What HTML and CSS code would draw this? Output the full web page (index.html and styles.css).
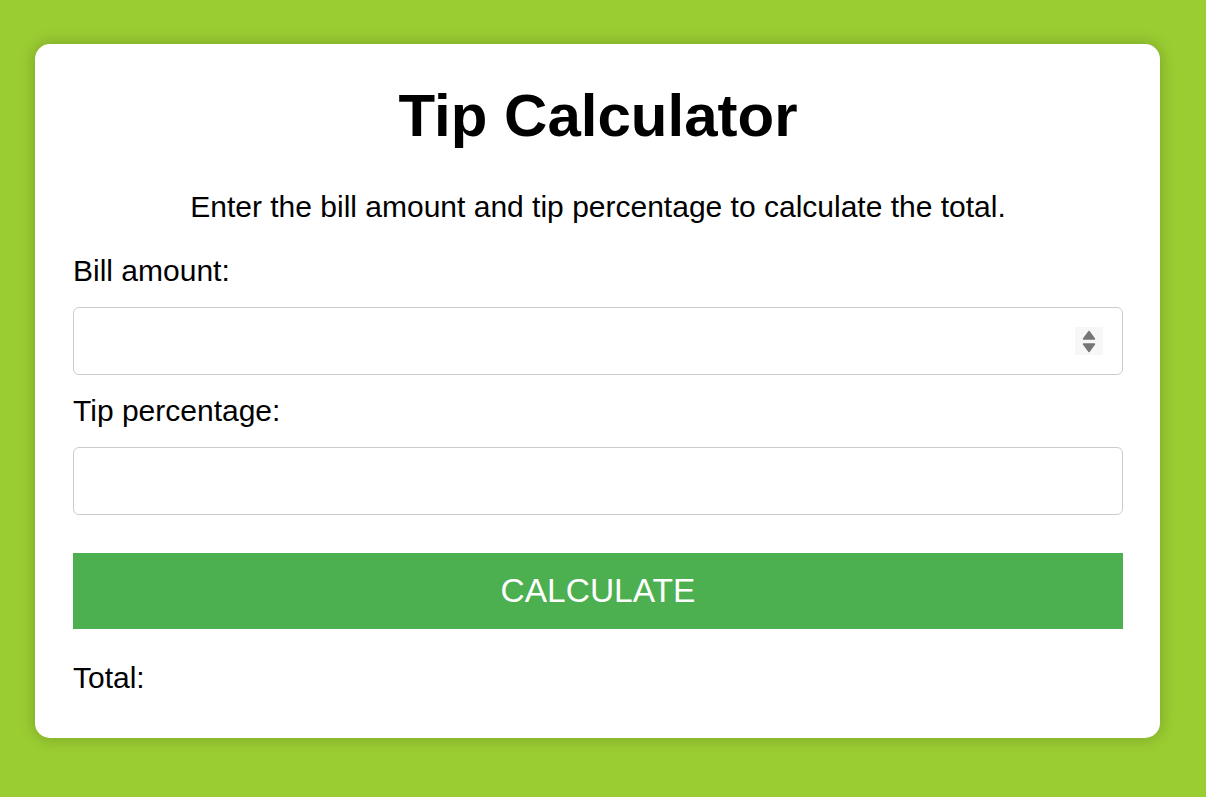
FILE: index.html
```html
<!DOCTYPE html>
<html lang="en">
<head>
<meta charset="utf-8">
<title>Tip Calculator</title>
<link rel="stylesheet" href="styles.css">
</head>
<body>
<main class="card">
  <h1 class="title">Tip Calculator</h1>
  <p class="intro">Enter the bill amount and tip percentage to calculate the total.</p>
  <label class="label" for="bill">Bill amount:</label>
  <div class="field">
    <input class="input" id="bill" type="number">
    <span class="spinner" aria-hidden="true">
      <svg width="28" height="28" viewBox="0 0 28 28">
        <rect width="28" height="28" fill="#f7f7f7"/>
        <path d="M14 4.5 L19.5 12 L8.5 12 Z" fill="#767676" stroke="#767676" stroke-width="1.5" stroke-linejoin="round"/>
        <path d="M14 24.5 L19.5 17 L8.5 17 Z" fill="#767676" stroke="#767676" stroke-width="1.5" stroke-linejoin="round"/>
      </svg>
    </span>
  </div>
  <label class="label" for="tip">Tip percentage:</label>
  <div class="field">
    <input class="input" id="tip" type="number">
  </div>
  <button class="button" type="button">CALCULATE</button>
  <p class="total">Total:</p>
</main>
</body>
</html>
```

FILE: styles.css
```css
html, body {
  margin: 0;
  padding: 0;
}

body {
  background: #9acd32;
  font-family: "Liberation Sans", Arial, sans-serif;
  color: #000;
  min-height: 797px;
}

.card {
  box-sizing: border-box;
  width: 1125px;
  margin: 44px 0 0 35px;
  padding: 37px 37px 42px 38px;
  background: #fff;
  border-radius: 15px;
  box-shadow: 0 0 16px rgba(0, 0, 0, 0.22);
  display: flex;
  flex-direction: column;
}

.title {
  margin: 0;
  font-size: 60px;
  line-height: 70px;
  font-weight: bold;
  text-align: center;
}

.intro {
  margin: 38px 0 0;
  font-size: 30px;
  line-height: 36px;
  text-align: center;
}

.label {
  display: block;
  margin-top: 28px;
  font-size: 30px;
  line-height: 36px;
}

.label + .field {
  margin-top: 18px;
}

.field + .label {
  margin-top: 18px;
}

.field {
  position: relative;
  display: flex;
}

.input {
  box-sizing: border-box;
  width: 100%;
  height: 68px;
  margin: 0;
  padding: 0 15px;
  border: 1px solid #ccc;
  border-radius: 6px;
  background: #fff;
  font-family: inherit;
  font-size: 30px;
  -moz-appearance: textfield;
}

.input::-webkit-outer-spin-button,
.input::-webkit-inner-spin-button {
  -webkit-appearance: none;
  margin: 0;
}

.spinner {
  position: absolute;
  right: 20px;
  top: 20px;
  width: 28px;
  height: 28px;
  display: block;
}

.spinner svg {
  display: block;
}

.button {
  margin-top: 38px;
  height: 76px;
  border: none;
  border-radius: 0;
  background: #4caf50;
  color: #fff;
  font-family: inherit;
  font-size: 33.5px;
  cursor: pointer;
}

.total {
  margin: 31px 0 0;
  font-size: 30px;
  line-height: 36px;
}
```
